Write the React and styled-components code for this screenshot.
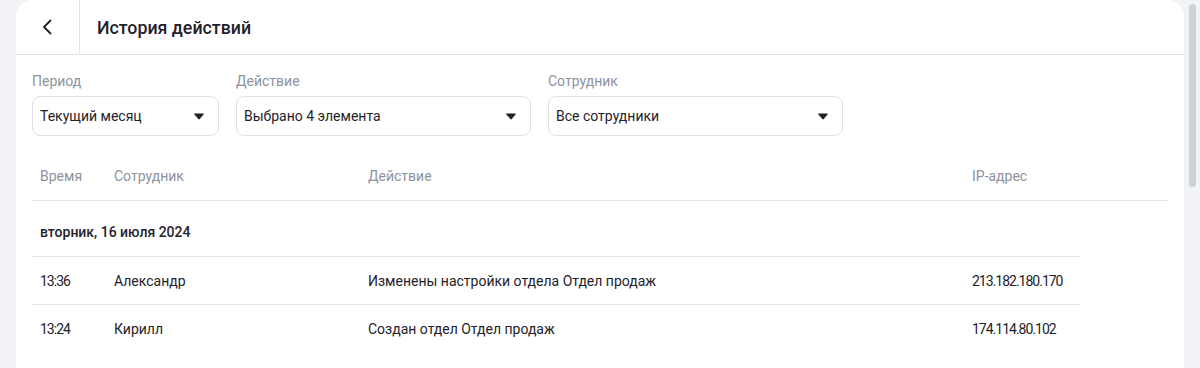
import React from 'react'
import styled, { createGlobalStyle } from 'styled-components'

const GlobalStyle = createGlobalStyle`
  html, body {
    margin: 0;
    padding: 0;
    background: #f2f3f7;
    font-family: Roboto, "Noto Sans", sans-serif;
    color: #1f2229;
    overflow: hidden;
  }
`;

const Page = styled.div`
  display: flex;
  height: 368px;
  padding-left: 16px;
`;

const Card = styled.div`
  flex: 1;
  background: #fff;
  border-radius: 16px 16px 0 0;
  height: 368px;
  overflow: hidden;
`;

const ScrollTrack = styled.div`
  width: 16px;
  display: flex;
  justify-content: center;
  padding-top: 4px;
`;

const ScrollThumb = styled.div`
  width: 7px;
  height: 183px;
  border-radius: 4px;
  background: #cfd1da;
`;

const Header = styled.div`
  display: flex;
  align-items: center;
  height: 54px;
  border-bottom: 1px solid #e1e3e8;
`;

const BackButton = styled.button`
  width: 64px;
  height: 54px;
  border: none;
  border-right: 1px solid #e1e3e8;
  background: none;
  display: flex;
  align-items: center;
  justify-content: center;
  padding: 0;
  cursor: pointer;
  color: #1f2229;
`;

const Title = styled.h1`
  margin: 0 0 0 17px;
  font-size: 17.8px;
  font-weight: 500;
`;

const Filters = styled.div`
  display: flex;
  gap: 17px;
  padding: 18px 16px 0;
`;

const Field = styled.div`
  display: flex;
  flex-direction: column;
  gap: 6px;
  width: ${({ $w }) => $w}px;
`;

const Label = styled.span`
  font-size: 14px;
  line-height: 17px;
  color: #8d929e;
`;

const Select = styled.div`
  height: 40px;
  box-sizing: border-box;
  border: 1px solid #dfe1e7;
  border-radius: 8px;
  display: flex;
  align-items: center;
  justify-content: space-between;
  padding: 0 14px 0 7px;
  font-size: 14px;
`;

const Table = styled.div`
  margin: 16px 16px 0;
`;

const HeadRow = styled.div`
  display: grid;
  grid-template-columns: 74px 254px 604px 1fr;
  height: 48px;
  align-items: center;
  border-bottom: 1px solid #e1e3e8;
  padding-left: 8px;
  font-size: 14px;
  color: #8d929e;
`;

const DateRow = styled.div`
  height: 56px;
  box-sizing: border-box;
  display: flex;
  align-items: center;
  padding: 7px 0 0 8px;
  font-size: 14px;
  font-weight: 500;
  border-bottom: 1px solid #e1e3e8;
  width: 1048px;
`;

const Row = styled.div`
  display: grid;
  grid-template-columns: 74px 254px 604px 1fr;
  height: 47px;
  align-items: center;
  padding-left: 8px;
  width: 1040px;
  font-size: 14px;
  border-bottom: 1px solid #e1e3e8;

  &:last-child {
    border-bottom-color: transparent;
  }
`;

const Num = styled.span`
  letter-spacing: -1px;
`;

const Caret = () => (
  <svg width="10" height="7" viewBox="0 0 10 7">
    <path d="M0.8 1h8.4L5 5.8z" fill="#1f2229" stroke="#1f2229" strokeWidth="1.2" strokeLinejoin="round" />
  </svg>
);

const filters = [
  { label: 'Период', value: 'Текущий месяц', w: 187 },
  { label: 'Действие', value: 'Выбрано 4 элемента', w: 295 },
  { label: 'Сотрудник', value: 'Все сотрудники', w: 295 },
];

const rows = [
  { time: '13:36', who: 'Александр', what: 'Изменены настройки отдела Отдел продаж', ip: '213.182.180.170' },
  { time: '13:24', who: 'Кирилл', what: 'Создан отдел Отдел продаж', ip: '174.114.80.102' },
];

export default function App() {
  return (
    <Page>
      <GlobalStyle />
      <Card>
        <Header>
          <BackButton>
            <svg width="20" height="20" viewBox="0 0 20 20" fill="none">
              <path d="M12.5 3.5L6 10l6.5 6.5" stroke="#1f2229" strokeWidth="1.8" strokeLinecap="round" strokeLinejoin="round" />
            </svg>
          </BackButton>
          <Title>История действий</Title>
        </Header>
        <Filters>
          {filters.map((f) => (
            <Field key={f.label} $w={f.w}>
              <Label>{f.label}</Label>
              <Select>
                {f.value}
                <Caret />
              </Select>
            </Field>
          ))}
        </Filters>
        <Table>
          <HeadRow>
            <span>Время</span>
            <span>Сотрудник</span>
            <span>Действие</span>
            <span>IP-адрес</span>
          </HeadRow>
          <DateRow>вторник, 16 июля 2024</DateRow>
          {rows.map((r) => (
            <Row key={r.time}>
              <Num>{r.time}</Num>
              <span>{r.who}</span>
              <span>{r.what}</span>
              <Num>{r.ip}</Num>
            </Row>
          ))}
        </Table>
      </Card>
      <ScrollTrack>
        <ScrollThumb />
      </ScrollTrack>
    </Page>
  )
}
